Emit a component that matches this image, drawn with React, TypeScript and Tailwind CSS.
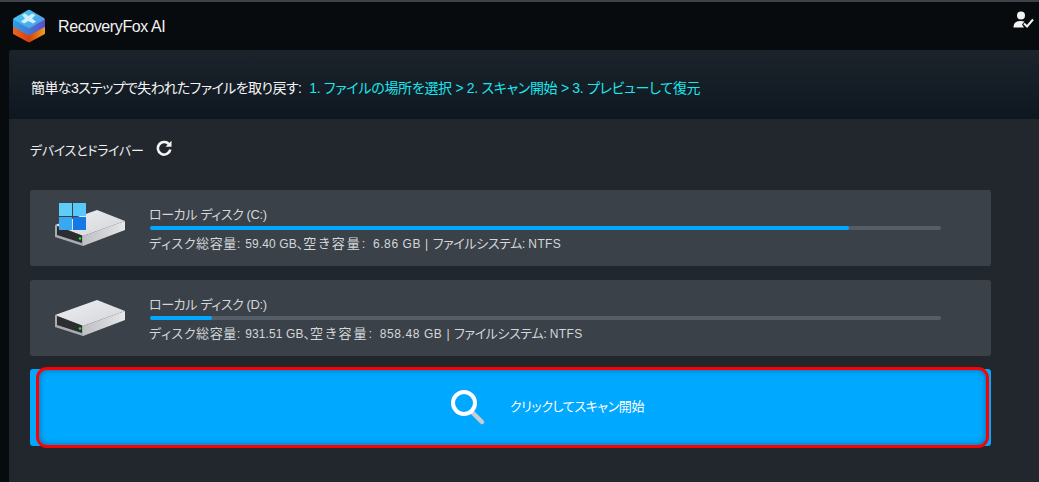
const fontStack = { fontFamily: '"Liberation Sans", "Noto Sans CJK JP", sans-serif' };

const disks = [
  { name: "ローカル ディスク (C:)", total: "59.40 GB", free: "6.86 GB", used: 88.4, system: true },
  { name: "ローカル ディスク (D:)", total: "931.51 GB", free: "858.48 GB", used: 7.8, system: false },
];

function Logo() {
  return (
    <svg width="34" height="34" viewBox="0 0 34 34">
      <defs>
        <linearGradient id="logoTop" x1="0" y1="0" x2="1" y2="0.6">
          <stop offset="0" stopColor="#3fd0f2" />
          <stop offset="1" stopColor="#4f9fe8" />
        </linearGradient>
        <linearGradient id="logoSide" x1="0" y1="0" x2="1" y2="0">
          <stop offset="0" stopColor="#2f9fe0" />
          <stop offset="1" stopColor="#5a4fc8" />
        </linearGradient>
        <linearGradient id="logoLow" x1="0" y1="0" x2="1" y2="0">
          <stop offset="0" stopColor="#f0641e" />
          <stop offset="0.5" stopColor="#d8400f" />
          <stop offset="1" stopColor="#eda021" />
        </linearGradient>
      </defs>
      <path d="M1 15 L17 24 L33 15 V24 Q33 25 32 25.500 L18 33 Q17 33.500 16 33 L2 25.500 Q1 25 1 24 Z" fill="url(#logoLow)" />
      <path d="M1 10 L17 19 L33 10 V17 Q33 18 32 18.500 L18 26 Q17 26.500 16 26 L2 18.500 Q1 18 1 17 Z" fill="url(#logoSide)" />
      <path d="M16 1 Q17 0.500 18 1 L32 9 Q33.500 10 32 11 L18 19 Q17 19.500 16 19 L2 11 Q0.500 10 2 9 Z" fill="url(#logoTop)" />
      <path d="M10 6 L13 4.500 L16.500 7 L20 4.500 L23.500 6 L20 9.500 L24 12.500 L21 14.500 L16.500 12 L12 14.500 L9 12.500 L13 9.500 Z" fill="#cdeefa" />
    </svg>
  );
}

function UserCheck() {
  return (
    <svg width="21" height="18" viewBox="0 0 21 18">
      <circle cx="8" cy="4.500" r="4" fill="#f2f2f2" />
      <path d="M0.500 16.500 C0.500 12 3 10 8 10 C9.500 10 10.500 10.200 11.500 10.600 L9 13.500 L11 16.500 Z" fill="#f2f2f2" />
      <path d="M11 12.500 L14 15.500 L20 8.500" fill="none" stroke="#f2f2f2" strokeWidth="2" />
    </svg>
  );
}

function Refresh() {
  return (
    <svg width="18" height="18" viewBox="0 0 18 18">
      <path d="M14.500 5 A6.300 6.300 0 1 0 15.300 9.500" fill="none" stroke="#f4f4f4" strokeWidth="2.600" />
      <path d="M10.500 6.800 H16.500 V0.800 Z" fill="#f4f4f4" />
    </svg>
  );
}

function Drive({ system }: { system: boolean }) {
  const id = system ? "c" : "d";
  return (
    <svg width="80" height="56" viewBox="0 0 80 56" className="shrink-0">
      <defs>
        <linearGradient id={`top-${id}`} x1="0" y1="0" x2="1" y2="1">
          <stop offset="0" stopColor="#f0f0f2" />
          <stop offset="1" stopColor="#d2d4d8" />
        </linearGradient>
        <linearGradient id={`right-${id}`} x1="0" y1="0" x2="1" y2="0">
          <stop offset="0" stopColor="#bdbfc3" />
          <stop offset="1" stopColor="#e6e7e9" />
        </linearGradient>
      </defs>
      <path d="M5 25 L47 10 L75 21 L33 36 Z" fill={`url(#top-${id})`} />
      <path d="M33 36 L75 21 V30 L33 46 Z" fill={`url(#right-${id})`} />
      <path d="M5 25 L33 36 V46 L5 37 Z" fill="#a8abb0" />
      <path d="M7 26 L32 35.500 V43 L7 35 Z" fill="#2b2d30" />
      <circle cx="30" cy="38.500" r="1.300" fill="#22e03a" />
      {system && (
        <g>
          <rect x="9" y="3" width="13" height="13" fill="#5fcdf8" />
          <rect x="23" y="3" width="13" height="13" fill="#58c8f8" />
          <rect x="9" y="17" width="13" height="13" fill="#3aa8f0" />
          <rect x="23" y="17" width="13" height="13" fill="#1478e6" />
        </g>
      )}
    </svg>
  );
}

function SearchIcon() {
  return (
    <svg width="40" height="40" viewBox="0 0 40 40">
      <line x1="26" y1="25" x2="35" y2="34" stroke="#c9cdd0" strokeWidth="4.500" strokeLinecap="round" />
      <circle cx="17" cy="15" r="11" fill="none" stroke="#ffffff" strokeWidth="4" />
    </svg>
  );
}

export default function App() {
  return (
    <div style={fontStack} className="flex h-[482px] w-[1039px] flex-col overflow-hidden border-t-2 border-[#3c4248] bg-[#080b0e] text-white [font-feature-settings:'palt']">
      <header className="flex h-[48px] shrink-0 items-start justify-between pl-[12px] pr-[5px]">
        <div className="flex items-center pt-[7px]">
          <Logo />
          <span className="ml-[12px] mt-[2px] text-[16px] tracking-[-0.4px] text-[#f2f2f2]">RecoveryFox AI</span>
        </div>
        <div className="pt-[9px]">
          <UserCheck />
        </div>
      </header>

      <div className="ml-[9px] flex min-h-0 flex-1 flex-col">
        <div className="flex h-[69px] shrink-0 items-center rounded-tl-[3px] bg-gradient-to-b from-[#1c232b] to-[#0e1720] pl-[22px] pt-[8px] text-[14px]">
          <span className="tracking-[-0.6px] text-[#f4f4f4]">簡単な3ステップで失われたファイルを取り戻す:</span>
          <span className="ml-[8px] tracking-[-0.3px] text-[#19e6ee]">1. ファイルの場所を選択 &gt; 2. スキャン開始 &gt; 3. プレビューして復元</span>
        </div>

        <main className="flex min-h-0 flex-1 flex-col bg-[#22272d] pl-[21px] pr-[48px]">
          <div className="flex h-[71px] shrink-0 items-center gap-[12px] pb-[12px] text-[13px] text-[#f0f0f0]">
            <span className="mt-[4px] tracking-[-0.3px]">デバイスとドライバー</span>
            <Refresh />
          </div>

          <div className="flex flex-col gap-[14px]">
            {disks.map((d) => (
              <div key={d.name} className="flex h-[76px] items-center rounded-[3px] bg-[#3b4148] pl-[20px]">
                <Drive system={d.system} />
                <div className="ml-[19px] flex flex-col pt-[3px]">
                  <span className="text-[13px] leading-[16px] tracking-[-0.4px] text-[#d4d7da]">{d.name}</span>
                  <div className="ml-[1px] mt-[3px] h-[4px] w-[791px] rounded-full bg-[#555e66]">
                    <div className="h-full rounded-full bg-[#00a8ff]" style={{ width: `${d.used}%` }} />
                  </div>
                  <span className="mt-[6px] text-[13px] leading-[16px] text-[#d4d7da]">
                    <span className="tracking-[0.6px]">ディスク総容量: </span>
                    <span className="text-[12px] tracking-[0.1px]">{d.total}</span>、
                    <span className="tracking-[2px]">空き容量: </span>
                    <span className="text-[12px] tracking-[0.6px]">{d.free} | </span>
                    <span className="tracking-[-0.4px]">ファイルシステム: </span>
                    <span className="text-[12px] tracking-[0.4px]">NTFS</span>
                  </span>
                </div>
              </div>
            ))}
          </div>

          <div className="relative mt-[13px] flex h-[77px] shrink-0 items-center justify-center rounded-[3px] bg-[#00a8ff] pl-[70px]">
            <SearchIcon />
            <span className="mb-[2px] ml-[23px] text-[13px] tracking-[-0.4px] text-white">クリックしてスキャン開始</span>
            <div className="absolute -bottom-[2px] -top-[2px] left-[6px] right-[2px] rounded-[11px] border-[3px] border-[#ff0000] shadow-[inset_0_0_6px_rgba(0,0,0,0.35)]" />
          </div>
        </main>
      </div>
    </div>
  );
}
